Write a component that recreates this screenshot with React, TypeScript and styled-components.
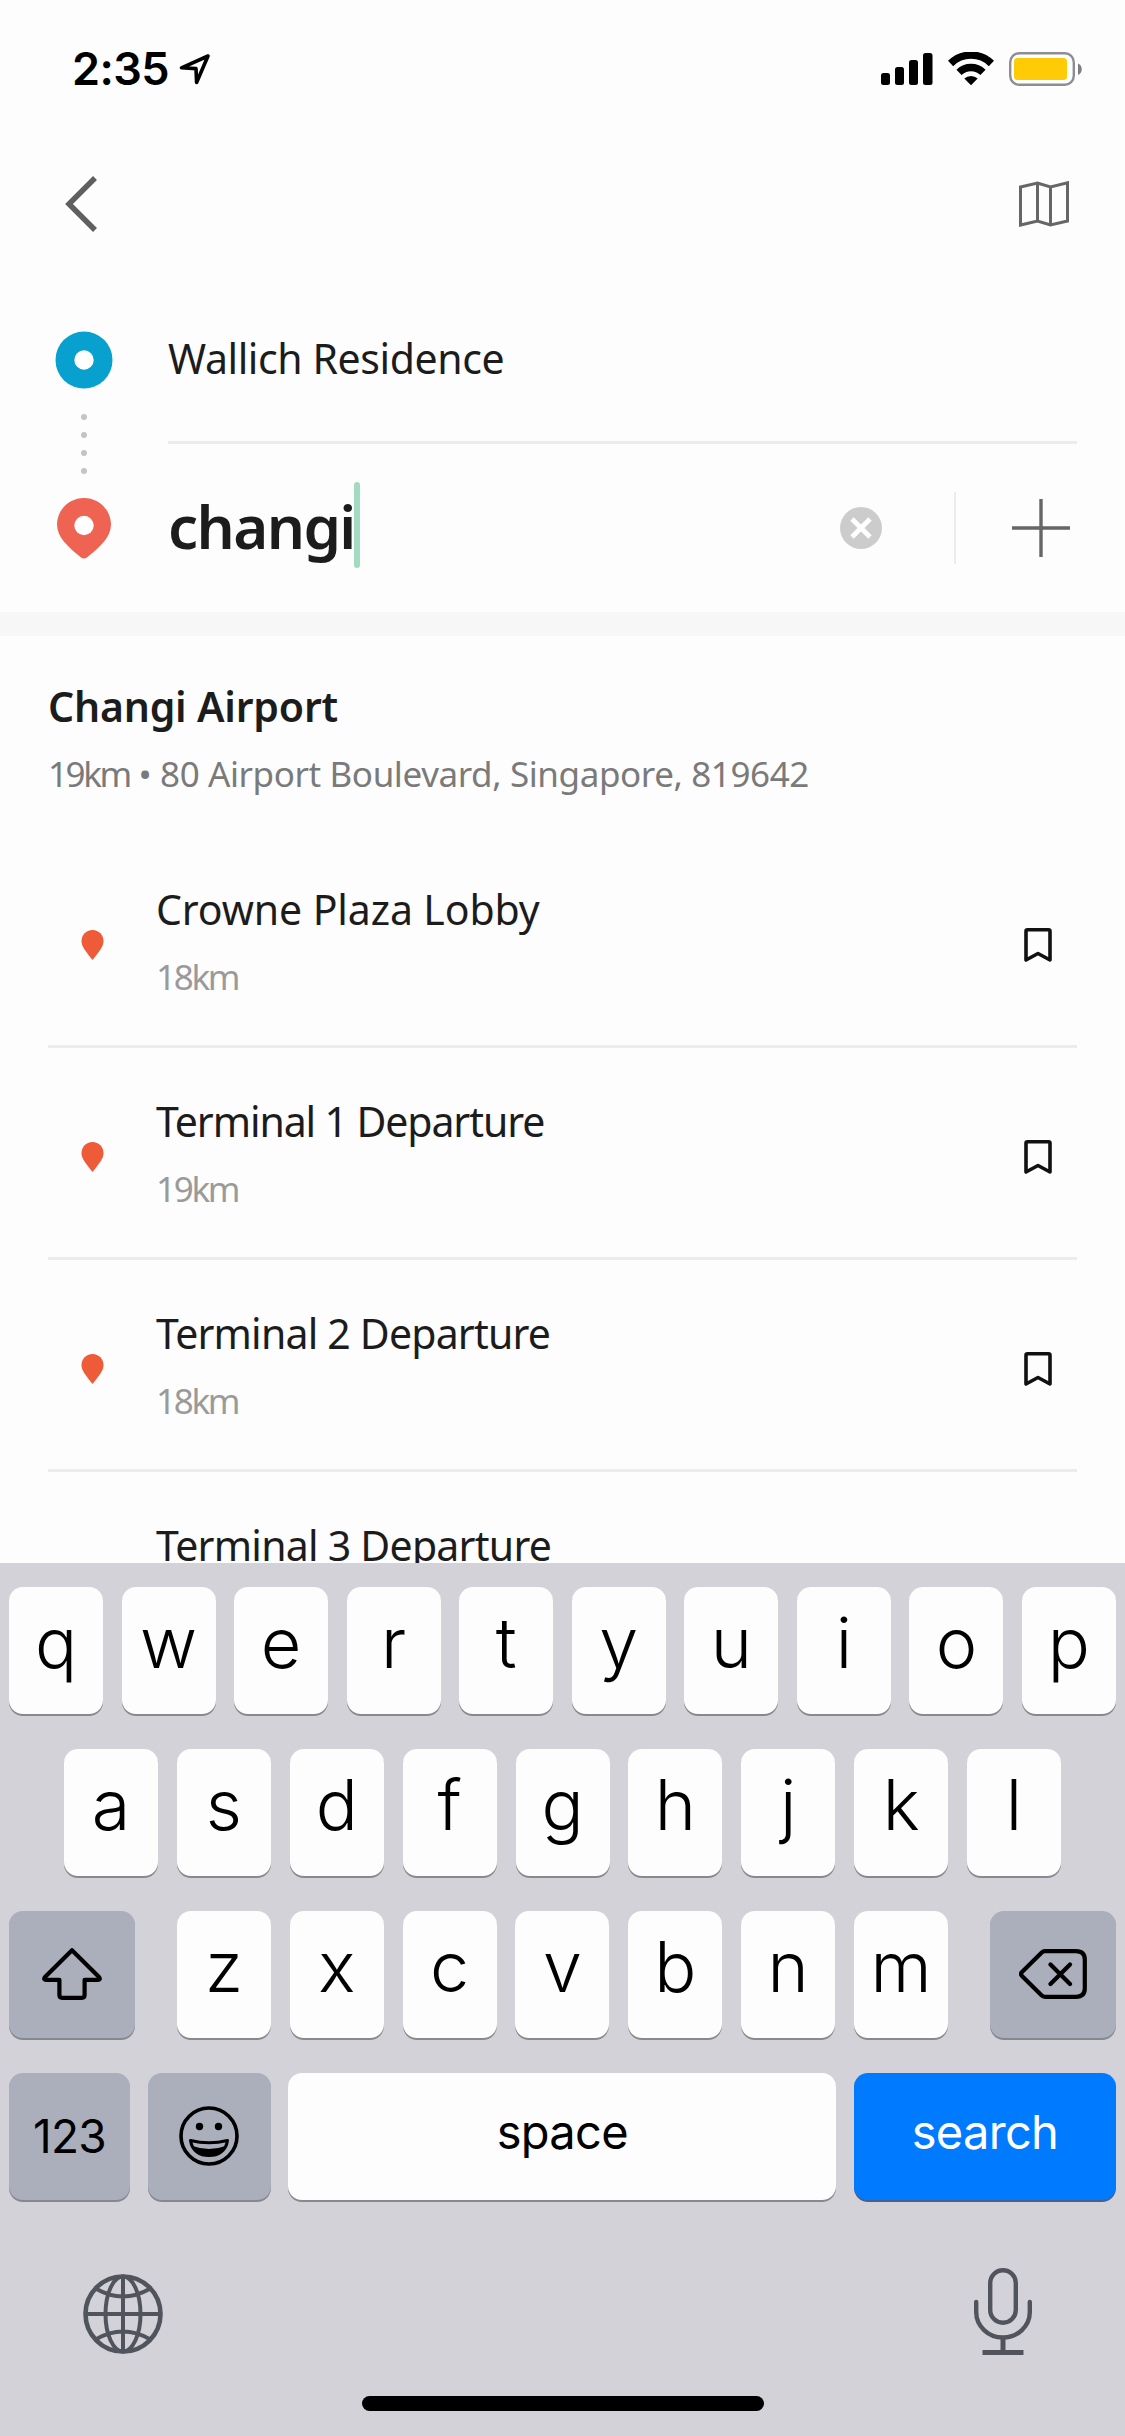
import React from 'react';
import styled, { createGlobalStyle } from 'styled-components';

const GlobalStyle = createGlobalStyle`
  * { box-sizing: border-box; }
  body { margin: 0; background: #fdfdfd; }
  svg { display: block; flex: none; }
`;

const brandFont = '"Noto Sans", "Open Sans", sans-serif';
const systemFont = 'Inter, Roboto, sans-serif';

const Screen = styled.div`
  width: 1125px;
  height: 2436px;
  overflow: hidden;
  display: flex;
  flex-direction: column;
  background: #fdfdfd;
  color: #1c1c1c;
  font-family: ${brandFont};
`;

const StatusBar = styled.header`
  height: 138px;
  flex: none;
  display: flex;
  align-items: center;
  justify-content: space-between;
  padding: 0 43px 0 72px;
`;

const Clock = styled.div`
  display: flex;
  align-items: center;
  gap: 10px;
  font: 600 45px/60px ${systemFont};
  letter-spacing: -0.6px;
  color: #000;
`;

const StatusIcons = styled.div`
  display: flex;
  align-items: center;
  gap: 15px;
`;

const NavBar = styled.nav`
  height: 132px;
  flex: none;
  display: flex;
  align-items: center;
  justify-content: space-between;
  padding: 0 55px 0 64px;
`;

const RoutePanel = styled.section`
  height: 342px;
  flex: none;
  display: grid;
  grid-template-columns: 168px 1fr;
  padding-right: 48px;
`;

const Rail = styled.div`
  display: flex;
  flex-direction: column;
  align-items: center;
  padding-top: 61px;
`;

const Dots = styled.div`
  display: flex;
  flex-direction: column;
  gap: 12px;
  margin: 25px 0 24px;
`;

const Dot = styled.i`
  width: 6px;
  height: 6px;
  border-radius: 50%;
  background: #c4c4c4;
`;

const Origin = styled.div`
  height: 174px;
  border-bottom: 3px solid #ececec;
  padding-top: 60px;
  font-size: 41px;
  line-height: 56px;
  letter-spacing: -0.4px;
`;

const Destination = styled.div`
  height: 168px;
  display: flex;
  align-items: center;
  padding-right: 7px;
`;

const Query = styled.div`
  flex: 1;
  display: flex;
  align-items: center;
  font-size: 60px;
  line-height: 80px;
  font-weight: 600;
  letter-spacing: -1.6px;

  span { margin-top: -4px; }
`;

const Caret = styled.i`
  width: 6px;
  height: 86px;
  margin: -6px 0 0 -1px;
  border-radius: 3px;
  background: #a3dbc0;
`;

const Divider = styled.i`
  width: 2px;
  height: 72px;
  margin: 0 56px 0 72px;
  background: #ececec;
`;

const Band = styled.div`
  height: 24px;
  flex: none;
  background: #f7f7f7;
`;

const Results = styled.main`
  height: 927px;
  flex: none;
  overflow: hidden;
  padding: 0 48px;
`;

const PlaceHeader = styled.div`
  height: 200px;
  padding-top: 42px;
`;

const PlaceTitle = styled.h1`
  margin: 0;
  font-size: 41px;
  line-height: 56px;
  font-weight: 600;
  letter-spacing: -0.2px;
`;

const PlaceAddress = styled.p`
  margin: 16px 0 0;
  font-size: 35px;
  line-height: 48px;
  letter-spacing: -0.4px;
  color: #7a7a7a;

  span { letter-spacing: -2.4px; }
`;

const Row = styled.div`
  height: 212px;
  display: grid;
  grid-template-columns: 108px 1fr auto;
  align-items: center;
  padding-right: 25px;
  border-bottom: 3px solid #ececec;

  > svg { margin-top: 8px; }
  > svg:first-child { margin-left: 33px; }
`;

const RowName = styled.div<{ $tracking: number }>`
  font-size: 41px;
  line-height: 56px;
  letter-spacing: ${p => p.$tracking}px;
`;

const RowDistance = styled.div`
  height: 48px;
  margin-top: 16px;
  font-size: 35px;
  line-height: 48px;
  letter-spacing: -2.3px;
  color: #9a9a9a;
`;

const Keyboard = styled.section`
  flex: 1;
  display: flex;
  flex-direction: column;
  gap: 36px;
  padding-top: 24px;
  background: #d2d2d8;
  font-family: ${systemFont};
  color: #000;
`;

const KeyRow = styled.div<{ $inset?: number }>`
  display: flex;
  justify-content: space-between;
  padding: 0 ${p => p.$inset ?? 9}px;
`;

const KeyGroup = styled.div`
  width: 771px;
  display: flex;
  justify-content: space-between;
`;

const tones = {
  letter: { bg: '#fdfdfd', fg: '#000', edge: '#88898d' },
  dark: { bg: '#abaebb', fg: '#000', edge: '#85888f' },
  action: { bg: '#007aff', fg: '#fff', edge: '#4a5f90' },
};

const Key = styled.button<{ $w?: number; $tone?: keyof typeof tones; $size?: number; $lift?: number }>`
  width: ${p => p.$w ?? 94}px;
  height: 127px;
  margin: 0 0 -1px;
  border: 0;
  border-radius: 14px;
  display: flex;
  align-items: center;
  justify-content: center;
  padding: 0 0 ${p => p.$lift ?? 15}px;
  background: ${p => tones[p.$tone ?? 'letter'].bg};
  color: ${p => tones[p.$tone ?? 'letter'].fg};
  box-shadow: 0 2px 0 ${p => tones[p.$tone ?? 'letter'].edge};
  font-family: inherit;
  font-size: ${p => p.$size ?? 70}px;
  font-weight: ${p => (p.$size ? 400 : 350)};
  line-height: 80px;
  letter-spacing: ${p => (p.$size ? -0.7 : 0)}px;
`;

const KeyboardFooter = styled.div`
  display: flex;
  justify-content: space-between;
  align-items: flex-end;
  padding: 32px 93px 0 82px;
`;

const HomeIndicator = styled.i`
  width: 402px;
  height: 15px;
  margin: 5px auto 0;
  border-radius: 8px;
  background: #000;
`;

const LocationArrow = () => (
  <svg width="32" height="32" viewBox="0 0 32 32" fill="none" stroke="#000" strokeWidth="3.6" strokeLinejoin="round">
    <path d="M29 3 2.500 14.800 17 15.600 17.600 29.500Z" />
  </svg>
);

const Signal = () => (
  <svg width="52" height="34" viewBox="0 0 52 34">
    <rect x="0" y="21" width="9" height="12" rx="2.5" />
    <rect x="14" y="15" width="9" height="18" rx="2.5" />
    <rect x="28" y="8" width="9" height="25" rx="2.5" />
    <rect x="42" y="1" width="9.5" height="32" rx="2.5" />
  </svg>
);

const Wifi = () => (
  <svg width="46" height="34" viewBox="0 0 46 34" fill="none" stroke="#000">
    <path d="M2.600 11.500A29 29 0 0 1 43.400 11.500" strokeWidth="7.400" />
    <path d="M11 20.300A17.300 17.300 0 0 1 35 20.300" strokeWidth="7.400" />
    <path d="M23 33.200 16.300 26.600A9.600 9.600 0 0 1 29.700 26.600Z" fill="#000" stroke="none" />
  </svg>
);

const Battery = () => (
  <svg width="73" height="34" viewBox="0 0 73 34">
    <rect x="1.2" y="1.2" width="63.6" height="31.6" rx="9" fill="#fff" stroke="#8e8e92" strokeWidth="2.4" />
    <rect x="5" y="6" width="53" height="22" rx="3.500" fill="#ffcb05" />
    <path d="M69 11.500c5 2 5 9.500 0 11.500Z" fill="#7e7e82" />
  </svg>
);

const BackChevron = () => (
  <svg width="34" height="58" viewBox="0 0 34 58" fill="none" stroke="#5f5f5f" strokeWidth="5.500">
    <path d="M31 3 5 29l26 26" />
  </svg>
);

const MapIcon = () => (
  <svg width="51" height="46" viewBox="0 0 51 46" fill="none" stroke="#666" strokeWidth="3">
    <path d="M1.500 6 18.500 2 31.500 6 48.500 1.800V40L31.500 44 18.500 40 1.500 44ZM18.500 2V40M31.500 6V44" />
  </svg>
);

const OriginMark = () => (
  <svg width="58" height="58" viewBox="0 0 58 58">
    <circle cx="29" cy="29" r="28.500" fill="#08a1cf" />
    <circle cx="29" cy="29" r="9.700" fill="#fff" />
  </svg>
);

const DestinationMark = () => (
  <svg width="54" height="61" viewBox="0 0 54 61">
    <path d="M27 0C12 0 0 12 0 26.500 0 39 11 49 23.500 59q3.500 3 7 0C43 49 54 39 54 26.500 54 12 42 0 27 0Z" fill="#ee6352" />
    <circle cx="27" cy="27.500" r="9.700" fill="#fff" />
  </svg>
);

const ClearIcon = () => (
  <svg width="42" height="42" viewBox="0 0 42 42">
    <circle cx="21" cy="21" r="21" fill="#ccc" />
    <path d="m12 12 18 18m0-18-18 18" stroke="#fff" strokeWidth="4.800" />
  </svg>
);

const PlusIcon = () => (
  <svg width="58" height="58" viewBox="0 0 58 58" stroke="#666" strokeWidth="3.400">
    <path d="M0 29H58M29 0V58" />
  </svg>
);

const SmallPin = () => (
  <svg width="23" height="30" viewBox="0 0 23 30">
    <path d="M11.500 0C5 0 .5 5 .5 11.200.5 16 4 20.500 11.500 30 19 20.500 22.500 16 22.500 11.200 22.500 5 18 0 11.500 0Z" fill="#ee5b38" />
  </svg>
);

const BookmarkIcon = () => (
  <svg width="28" height="34" viewBox="0 0 28 34" fill="none" stroke="#111" strokeWidth="3.600" strokeLinejoin="round">
    <path d="M3.500 1.800h21q1.500 0 1.500 1.500V32L14 25.500 2 32V3.300q0-1.500 1.500-1.500Z" />
  </svg>
);

const ShiftIcon = () => (
  <svg width="60" height="52" viewBox="0 0 60 52" fill="none" stroke="#000" strokeWidth="4.200" strokeLinejoin="round">
    <path d="M30 2.200 57 29q2 2.500-1 2.800H42.600V47q0 2.800-2.800 2.800H20.200q-2.800 0-2.800-2.800V31.800H4q-3-.3-1-2.800Z" />
  </svg>
);

const BackspaceIcon = () => (
  <svg width="68" height="50" viewBox="0 0 68 50" fill="none" stroke="#000" strokeWidth="4.200" strokeLinejoin="round" strokeLinecap="round">
    <path d="M26 2.200H57q8.800 0 8.800 8.500V39.300q0 8.500-8.800 8.500H26q-2 0-3.500-1.500L3 27q-2-2 0-4L22.500 3.700Q24 2.200 26 2.200ZM31.500 15.500 51 35M51 15.500 31.500 35" />
  </svg>
);

const SmileIcon = () => (
  <svg width="60" height="60" viewBox="0 0 60 60" fill="none" stroke="#000">
    <circle cx="30" cy="30" r="28" strokeWidth="3.600" />
    <circle cx="20.500" cy="20.500" r="3.700" fill="#000" stroke="none" />
    <circle cx="39.500" cy="20.500" r="3.700" fill="#000" stroke="none" />
    <path d="M11.500 34.500Q30 39 48.500 34.500C47 45 39 49.500 30 49.500S13 45 11.500 34.500Z" strokeWidth="3" strokeLinejoin="round" />
    <path d="M13.500 40Q30 46 46.500 40C43 47.500 36 49.500 30 49.500S17 47.500 13.500 40Z" fill="#000" stroke="none" />
  </svg>
);

const GlobeIcon = () => (
  <svg width="82" height="82" viewBox="0 0 82 82" fill="none" stroke="#51545d" strokeWidth="4">
    <circle cx="41" cy="41" r="37.500" strokeWidth="4.600" />
    <ellipse cx="41" cy="41" rx="17.500" ry="37.500" />
    <path d="M41 3V79M3 41H79M14.500 16Q41 31 67.500 16M14.500 66Q41 51 67.500 66" />
  </svg>
);

const MicIcon = () => (
  <svg width="58" height="88" viewBox="0 0 58 88" fill="none" stroke="#51545d" strokeWidth="4.400" strokeLinecap="round">
    <rect x="16.200" y="3.200" width="25.600" height="52.600" rx="12.800" />
    <path d="M2.200 35V45a26.800 25.500 0 0 0 53.600 0V35" />
    <path d="M29 71V84M8.500 85.500H49.500" strokeLinecap="butt" strokeWidth="5" />
  </svg>
);

const places = [
  { name: 'Crowne Plaza Lobby', distance: '18km', tracking: -0.1 },
  { name: 'Terminal 1 Departure', distance: '19km', tracking: -1.1 },
  { name: 'Terminal 2 Departure', distance: '18km', tracking: -0.8 },
  { name: 'Terminal 3 Departure', distance: null, tracking: -0.75 },
];

const letters = (keys: string) => [...keys].map(k => <Key key={k}>{k}</Key>);

export default function App() {
  return (
    <Screen>
      <GlobalStyle />
      <StatusBar>
        <Clock>2:35<LocationArrow /></Clock>
        <StatusIcons><Signal /><Wifi /><Battery /></StatusIcons>
      </StatusBar>
      <NavBar>
        <BackChevron />
        <MapIcon />
      </NavBar>
      <RoutePanel>
        <Rail>
          <OriginMark />
          <Dots><Dot /><Dot /><Dot /><Dot /></Dots>
          <DestinationMark />
        </Rail>
        <div>
          <Origin>Wallich Residence</Origin>
          <Destination>
            <Query><span>changi</span><Caret /></Query>
            <ClearIcon />
            <Divider />
            <PlusIcon />
          </Destination>
        </div>
      </RoutePanel>
      <Band />
      <Results>
        <PlaceHeader>
          <PlaceTitle>Changi Airport</PlaceTitle>
          <PlaceAddress><span>19km</span> • 80 Airport Boulevard, Singapore, 819642</PlaceAddress>
        </PlaceHeader>
        {places.map(place => (
          <Row key={place.name}>
            <SmallPin />
            <div>
              <RowName $tracking={place.tracking}>{place.name}</RowName>
              <RowDistance>{place.distance}</RowDistance>
            </div>
            <BookmarkIcon />
          </Row>
        ))}
      </Results>
      <Keyboard>
        <KeyRow>{letters('qwertyuiop')}</KeyRow>
        <KeyRow $inset={64}>{letters('asdfghjkl')}</KeyRow>
        <KeyRow>
          <Key $w={126} $tone="dark" $lift={2}><ShiftIcon /></Key>
          <KeyGroup>{letters('zxcvbnm')}</KeyGroup>
          <Key $w={126} $tone="dark" $lift={2}><BackspaceIcon /></Key>
        </KeyRow>
        <KeyRow>
          <Key $w={121} $tone="dark" $size={46} $lift={2}>123</Key>
          <Key $w={123} $tone="dark" $lift={1}><SmileIcon /></Key>
          <Key $w={548} $size={47} $lift={9}>space</Key>
          <Key $w={262} $tone="action" $size={47} $lift={9}>search</Key>
        </KeyRow>
        <KeyboardFooter><GlobeIcon /><MicIcon /></KeyboardFooter>
        <HomeIndicator />
      </Keyboard>
    </Screen>
  );
}
